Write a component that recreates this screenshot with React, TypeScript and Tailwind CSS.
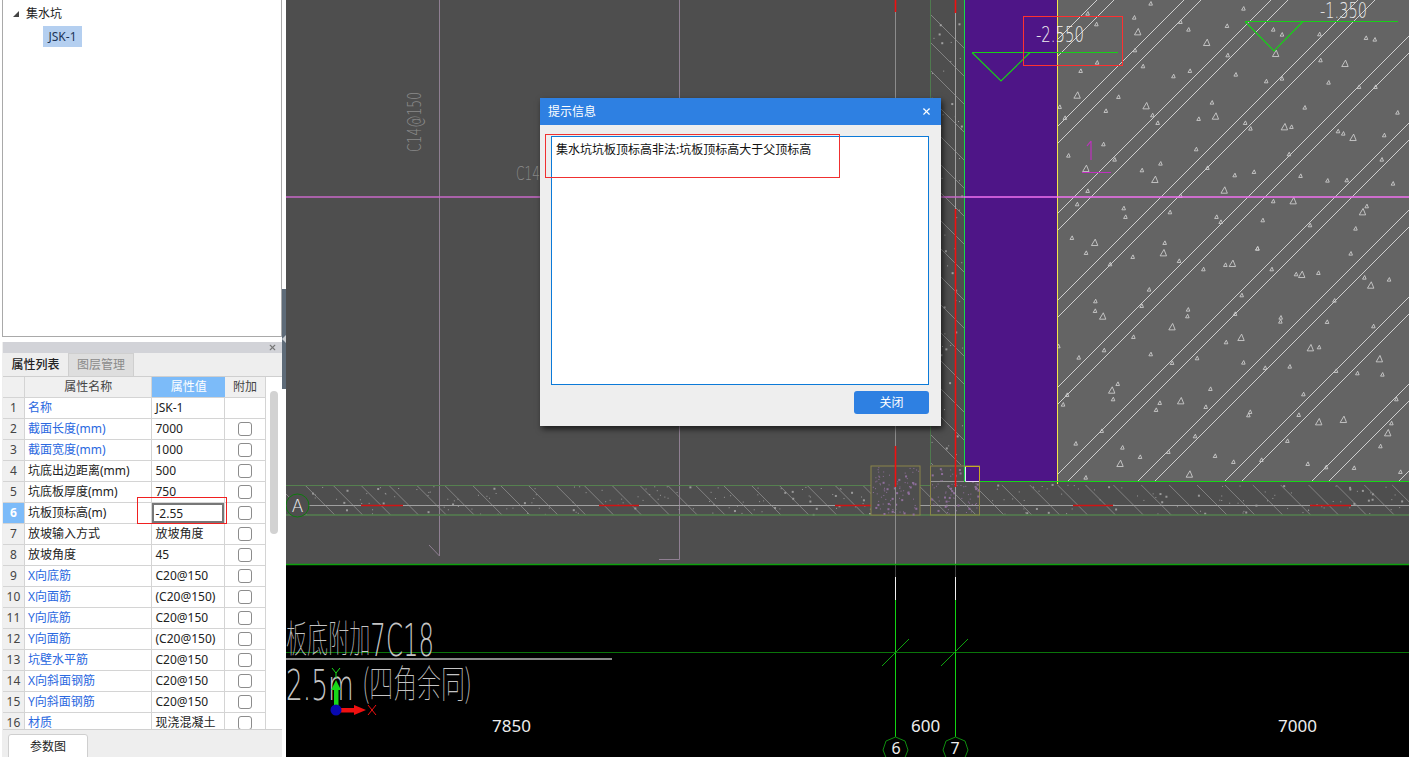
import { X } from "lucide-react";

const rows = [
  { name: "名称", value: "JSK-1", blue: true, noCheck: true },
  { name: "截面长度(mm)", value: "7000", blue: true },
  { name: "截面宽度(mm)", value: "1000", blue: true },
  { name: "坑底出边距离(mm)", value: "500" },
  { name: "坑底板厚度(mm)", value: "750" },
  { name: "坑板顶标高(m)", value: "-2.55", active: true },
  { name: "放坡输入方式", value: "放坡角度" },
  { name: "放坡角度", value: "45" },
  { name: "X向底筋", value: "C20@150", blue: true },
  { name: "X向面筋", value: "(C20@150)", blue: true },
  { name: "Y向底筋", value: "C20@150", blue: true },
  { name: "Y向面筋", value: "(C20@150)", blue: true },
  { name: "坑壁水平筋", value: "C20@150", blue: true },
  { name: "X向斜面钢筋", value: "C20@150", blue: true },
  { name: "Y向斜面钢筋", value: "C20@150", blue: true },
  { name: "材质", value: "现浇混凝土", blue: true },
];

// aggregate marks read off the drawing: x, y, large
const upperMarks = [
  [830,10],[650,40],[783,52],[915,65],[1095,25],[675,72],[1048,77],[938,88],[793,95,1],[1180,88],[1205,103],[1312,102],
  [990,127,1],[785,150],[1050,165],[1187,160,1],[1445,113],[1470,118],[677,187],[808,198],[1315,180],[1385,190,1],[630,212],
  [895,228],[942,212],[1073,223],[1205,235],[1160,243],[1338,247],[1425,260],[1472,260],[620,285,1],[738,290],[1005,307],
  [1270,322],[570,320],[702,332],[817,317,1],[1535,337],[835,345],[1015,348,1],[967,356],[585,353],[850,368],[1100,368],
  [1115,385],[1212,380,1],[1232,380],[1365,393],[1380,400],[1408,412,1],[1497,405],[695,432],[960,447],[1225,462],[595,466],
  [727,478],[1490,478],[645,505,1],[858,490],[992,503],[805,510],[1070,525],[1125,515],[1258,527],[842,538,1],[1335,541],
  [1390,540],[1522,550],[650,572],[1040,570,1],[620,612],[915,587],[1180,603],[1237,602,1],[1447,618],[1435,635,1],[753,624],
  [885,636],[758,650],[1018,650],[1030,665],[1150,660],[1285,675],[1415,685],[605,713],[670,727,1],[870,728],[1135,745],
].map(([x, y, l]) => [x / 2.856 + 860, y / 3, l]);

const lowerMarks = [
  [108,38],[248,50],[340,38,1],[387,62],[180,72],[526,74],[547,70,1],[460,87],[665,87],[738,102],[755,103,1],[805,98],[622,25],
  [902,40],[943,112],[1017,118],[962,135,1],[297,148],[575,165],[853,181],[136,183],[275,197],[135,212],[158,228,1],[414,208],
  [412,228],[555,221],[692,232],[691,244],[831,245],[970,258],[366,260,1],[250,290],[573,292,1],[528,306],[781,323,1],[807,321],
  [25,318],[162,330],[302,342],[86,352],[441,354],[988,356,1],[366,368],[580,367],[719,379],[645,383],[858,392],[922,399],[997,403],
  [203,431],[185,450,1],[481,446],[51,464],[189,477],[39,493],[329,488],[392,482,1],[467,500],[760,462],[1039,477],[318,509],
  [600,515],[595,525],[746,524],[806,545,1],[880,538,1],[155,572],[1024,549],[435,588],[77,610],[712,602],[1013,578,1],[991,618],
  [217,622],[355,635],[270,650],[495,647],[550,665],[634,659],[210,670,1],[773,671],[828,681],[912,683],[107,712],[418,702,1],[1051,695],
].map(([x, y, l]) => [x / 3 + 1050, y / 3 + 240, l]);

const marks = [...upperMarks, ...lowerMarks];

// small repeatable noise for the concrete speckle
let seed = 17;
function rnd() {
  seed = (seed * 16807) % 2147483647;
  return seed / 2147483647;
}
function speckle(x: number, y: number, w: number, h: number, count: number) {
  return Array.from({ length: count }, () => [x + rnd() * w, y + rnd() * h, rnd() > 0.75 ? 2 : 1]);
}

const stripDots = [...speckle(312, 486, 559, 28, 130), ...speckle(980, 483, 429, 31, 90)];
const wallDots = speckle(931, 0, 32, 465, 60);
const boxDots = [...speckle(872, 467, 47, 47, 90), ...speckle(931, 467, 47, 47, 80)];
const slabLines: number[] = [];
for (let c = 1097; c < 1900; c += 87) {
  slabLines.push(c, c + 17);
}

function Drawing() {
  return (
    <svg viewBox="286 0 1123 757" className="block h-[757px] w-[1123px]">
      <rect x="286" y="0" width="1123" height="564" fill="#4e4e4e" />
      <rect x="286" y="565" width="1123" height="192" fill="#000" />

      {/* rebar leaders */}
      <path d="M439.5 0V556L429 545" stroke="#8f7f92" fill="none" />
      <path d="M679.5 0V559.5H659" stroke="#8f7f92" fill="none" />
      <text transform="translate(421 152) rotate(-90)" fontSize="19" fill="#8a8a8a" fontFamily="DejaVu Sans" fontWeight="200" textLength="60" lengthAdjust="spacingAndGlyphs">C14@150</text>
      <text x="516" y="180" fontSize="19" fill="#8a8a8a" fontFamily="DejaVu Sans" fontWeight="200" textLength="24" lengthAdjust="spacingAndGlyphs">C14</text>

      {/* slab fill */}
      <rect x="1057" y="0" width="352" height="481" fill="#646464" />
      <clipPath id="slab"><rect x="1058" y="0" width="351" height="481" /></clipPath>
      <g clipPath="url(#slab)" stroke="#cfcfcf">
        {slabLines.map((c) => (
          <line key={c} x1={c} y1="0" x2={c - 500} y2="500" />
        ))}
      </g>
      {marks.map(([x, y, l], i) => {
        const r = l ? 3.2 : 1.8;
        return <path key={i} d={`M${x - r} ${y + r}L${x + r * 0.2} ${y - r}L${x + r} ${y + r}Z`} fill="none" stroke="#cccccc" strokeWidth="0.9" />;
      })}

      {/* wall */}
      <clipPath id="wall"><rect x="931" y="0" width="33" height="465" /></clipPath>
      <g clipPath="url(#wall)" stroke="#8f8f8f" strokeWidth="0.8">
        {Array.from({ length: 20 }, (_, i) => (
          <line key={i} x1="900" y1={-16 + i * 28} x2="1000" y2={84 + i * 28} />
        ))}
      </g>
      {wallDots.map(([x, y, s], i) => (
        <rect key={i} x={x} y={y} width={s} height={s} fill="#a0a0a0" />
      ))}
      <line x1="930.5" y1="0" x2="930.5" y2="465" stroke="#4f7a4f" />
      <rect x="965" y="0" width="92" height="481" fill="#4e1587" />
      <line x1="964.5" y1="0" x2="964.5" y2="481" stroke="#16d84a" />
      <line x1="1057.5" y1="0" x2="1057.5" y2="484" stroke="#f5e64a" />

      {/* strip footing */}
      <clipPath id="strip">
        <rect x="286" y="486" width="694" height="29" />
        <rect x="980" y="482" width="429" height="33" />
      </clipPath>
      <g clipPath="url(#strip)" stroke="#8f8f8f" strokeWidth="0.8">
        {Array.from({ length: 43 }, (_, i) => (
          <line key={i} x1={277 + i * 27.88} y1="485" x2={307 + i * 27.88} y2="515" />
        ))}
      </g>
      {stripDots.map(([x, y, s], i) => (
        <rect key={i} x={x} y={y} width={s} height={s} fill="#9a9a9a" />
      ))}
      <line x1="286" y1="485.5" x2="871" y2="485.5" stroke="#55804f" />
      <line x1="920" y1="485.5" x2="931" y2="485.5" stroke="#55804f" />
      <line x1="286" y1="515" x2="1409" y2="515" stroke="#55804f" strokeWidth="1.6" />
      <line x1="286" y1="505.5" x2="1409" y2="505.5" stroke="#a0a0a0" />
      <path d="M361 505.5H403M599 505.5H639M835 505.5H876M1073 505.5H1113M1310 505.5H1351" stroke="#d01414" strokeWidth="1.6" />
      <line x1="930" y1="481.5" x2="965" y2="481.5" stroke="#9a9a9a" />
      <line x1="964" y1="481.5" x2="1409" y2="481.5" stroke="#16d816" strokeWidth="1.2" />

      {/* column boxes */}
      <rect x="871" y="466" width="49" height="49" fill="#4e4e4e" stroke="#8a8448" />
      <rect x="930.5" y="466" width="49" height="49" fill="none" stroke="#8a8448" />
      {boxDots.map(([x, y, s], i) => (
        <rect key={i} x={x} y={y} width={s} height={s} fill="#8f6f9c" />
      ))}
      <rect x="965" y="466" width="14" height="15" fill="#4e1587" />
      <path d="M965.5 466V481.5H979" stroke="#e8d8f8" fill="none" />
      <path d="M965 466.5H979.5V481" stroke="#c8a828" fill="none" />

      {/* grid lines */}
      <line x1="895.5" y1="0" x2="895.5" y2="564" stroke="#8c8c8c" />
      <line x1="955.5" y1="0" x2="955.5" y2="564" stroke="#a0a0a0" />
      <path d="M895.5 565V577M955.5 565V577" stroke="#444" />
      <path d="M895.5 0V12M895.5 446V487M955.5 0V13M955.5 209V487" stroke="#f01010" strokeWidth="1.6" />
      <line x1="286" y1="197" x2="964" y2="197" stroke="#c868c8" strokeWidth="1.4" />
      <line x1="964" y1="197" x2="1409" y2="197" stroke="#f070f0" strokeWidth="1.4" />
      <line x1="286" y1="564.5" x2="1409" y2="564.5" stroke="#0ca00c" strokeWidth="1.5" />

      {/* level marks */}
      <path d="M972 52.5H1118M972 52.5L1001 81L1030 52.5" stroke="#17d017" fill="none" strokeWidth="1.2" />
      <path d="M1245 21.5H1398M1245 21.5L1274 51L1303 21.5" stroke="#17d017" fill="none" strokeWidth="1.2" />
      <rect x="1023.5" y="16.5" width="99" height="49" fill="none" stroke="#ff3030" />
      <text x="1036" y="42" fontSize="21" fill="#f0f0f0" fontFamily="DejaVu Sans" fontWeight="200" textLength="48" lengthAdjust="spacingAndGlyphs">-2.550</text>
      <text x="1320" y="18" fontSize="21" fill="#e8e8e8" fontFamily="DejaVu Sans" fontWeight="200" textLength="47" lengthAdjust="spacingAndGlyphs">-1.350</text>
      <path d="M1091 141V160M1087 146L1091 141M1082 172.5H1111" stroke="#c030c0" fill="none" strokeWidth="1.2" />

      {/* axis bubble A */}
      <circle cx="297.5" cy="505.5" r="11.5" fill="#4e4e4e" stroke="#0e7a0e" />
      <text x="297.5" y="512" textAnchor="middle" fontSize="17" fill="#f2f2f2" fontFamily="DejaVu Sans" fontWeight="200">A</text>

      {/* lower sheet */}
      <line x1="286" y1="652.5" x2="1409" y2="652.5" stroke="#0a740a" />
      <line x1="286" y1="659" x2="612" y2="659" stroke="#b8b8b8" strokeWidth="1.3" />
      <path d="M895.5 577V600M955.5 577V600" stroke="#f0f0f0" />
      <path d="M895.5 600V737M955.5 600V737" stroke="#12d212" />
      <path d="M882 666L909 639M941 666L968 639" stroke="#0ea00e" />
      <text x="286" y="652" fontSize="38" fill="#c4c4c4" fontFamily="Noto Sans CJK SC" fontWeight="100" textLength="148" lengthAdjust="spacingAndGlyphs">
        板底附加<tspan dy="4" fontSize="44" fontFamily="DejaVu Sans" fontWeight="200">7C18</tspan>
      </text>
      <text x="286" y="700" fontSize="42" fill="#c4c4c4" fontFamily="DejaVu Sans" fontWeight="200" textLength="186" lengthAdjust="spacingAndGlyphs">
        2.5m <tspan dy="-3" fontSize="38" fontFamily="Noto Sans CJK SC" fontWeight="100">(四角余同)</tspan>
      </text>
      <text x="492" y="732" fontSize="17" fill="#eeeeee" fontFamily="Noto Sans">7850</text>
      <text x="911" y="732" fontSize="17" fill="#eeeeee" fontFamily="Noto Sans">600</text>
      <text x="1278" y="732" fontSize="17" fill="#eeeeee" fontFamily="Noto Sans">7000</text>
      <polygon points="895.5,737 905,741 908,750 904,760 887,760 883,750 886,741" fill="#000" stroke="#0e8a0e" />
      <polygon points="955.5,737 965,741 968,750 964,760 947,760 943,750 946,741" fill="#000" stroke="#0e8a0e" />
      <text x="896" y="754" textAnchor="middle" fontSize="16" fill="#eeeeee" fontFamily="Noto Sans">6</text>
      <text x="955" y="754" textAnchor="middle" fontSize="16" fill="#eeeeee" fontFamily="Noto Sans">7</text>

      {/* coordinate triad */}
      <rect x="334" y="689" width="4.5" height="17" fill="#18d818" />
      <polygon points="336,680 341,690 331,690" fill="#18d818" />
      <rect x="340" y="708" width="15" height="4.5" fill="#f01010" />
      <polygon points="366,710 354,705 354,715" fill="#f01010" />
      <circle cx="336" cy="710" r="5.5" fill="#0808b0" />
      <path d="M332 668L336 673L340 668M336 673V678" stroke="#18d818" fill="none" />
      <path d="M368 705L376 715M376 705L368 715" stroke="#f01010" fill="none" />
    </svg>
  );
}

function PropertyPanel() {
  return (
    <section className="relative flex h-[415px] flex-col overflow-hidden bg-[#eeeeee] pl-[1px]">
      <div className="flex h-[11px] items-center justify-end bg-[#d2d3d8] pr-[5px]">
        <X size={9} strokeWidth={3} className="text-[#777]" />
      </div>
      <div className="flex h-[24px] border-b border-[#cfcfcf] text-[12px]">
        <div className="flex w-[65px] items-center justify-center bg-[#eeeeee] font-medium text-[#222]">属性列表</div>
        <div className="flex w-[66px] items-center justify-center border-x border-t border-[#cfcfcf] bg-[#dedede] text-[#8a8a8a]">图层管理</div>
      </div>
      <div className="flex min-h-0 flex-1">
        <div className="w-[264px] overflow-hidden">
          <div className="flex h-[21px] border-b border-[#d4d4d4] text-[12px] leading-[20px]">
            <div className="w-[22px] border-r border-[#d4d4d4] bg-[#f0f0f0]" />
            <div className="w-[128px] border-r border-[#d4d4d4] bg-[#f0f0f0] text-center text-[#444]">属性名称</div>
            <div className="w-[73px] bg-[#7cbbf9] text-center text-white">属性值</div>
            <div className="w-[41px] border-r border-[#d4d4d4] bg-[#f0f0f0] text-center text-[#444]">附加</div>
          </div>
          {rows.map((row, i) => (
            <div key={row.name} className="flex h-[21px] border-b border-[#d4d4d4] bg-white text-[12px] leading-[20px]">
              <div className={row.active ? "w-[22px] border-r border-[#d4d4d4] bg-[#7cbbf9] text-center font-bold text-white" : "w-[22px] border-r border-[#d4d4d4] bg-[#f0f0f0] text-center text-[#444]"}>
                {i + 1}
              </div>
              <div className={row.blue ? "w-[128px] border-r border-[#d4d4d4] pl-[3px] whitespace-nowrap text-[#2a68e0]" : "w-[128px] border-r border-[#d4d4d4] pl-[3px] whitespace-nowrap text-[#222]"}>
                {row.name}
              </div>
              <div className="w-[73px] border-r border-[#d4d4d4] text-[#222]">
                {row.active ? (
                  <div className="h-[20px] border-2 border-[#777] pl-[1px] leading-[17px]">{row.value}</div>
                ) : (
                  <div className="pl-[3px]">{row.value}</div>
                )}
              </div>
              <div className="flex w-[41px] items-center justify-center border-r border-[#d4d4d4]">
                {!row.noCheck && <div className="size-[14px] rounded-[3px] border border-[#8c8c8c] bg-white" />}
              </div>
            </div>
          ))}
        </div>
        <div className="w-[16px] bg-white pt-[14px] pl-[4px]">
          <div className="h-[143px] w-[8px] rounded-[4px] bg-[#d2d2d2]" />
        </div>
      </div>
      <div className="h-[28px] border-t border-[#d0d0d0] pt-[3px] pl-[5px]">
        <button className="h-[26px] w-[80px] rounded-[3px] border border-[#cfcfcf] bg-white text-[12px] text-[#222]">参数图</button>
      </div>
      {/* red review mark around the edited value */}
      <div className="absolute top-[155px] left-[135px] h-[27px] w-[90px] border border-[#f02020]" />
    </section>
  );
}

export default function App() {
  return (
    <div className="flex h-[757px] w-[1409px] overflow-hidden bg-white font-['Noto_Sans','Noto_Sans_CJK_SC',sans-serif] text-[#222]">
      <aside className="flex w-[282px] flex-col pl-[2px]">
        <div className="h-[337px] border-x border-b border-[#a9a9a9] bg-white pt-[4px] text-[12px]">
          <div className="flex h-[20px] items-center pl-[10px]">
            <span className="h-0 w-0 border-b-[6px] border-l-[6px] border-b-[#444] border-l-transparent" />
            <span className="pl-[7px]">集水坑</span>
          </div>
          <div className="mt-[2px] ml-[40px] flex h-[21px] w-[39px] items-center justify-center bg-[#b4cff0] text-[#1c3558]">JSK-1</div>
        </div>
        <div className="h-[5px]" />
        <PropertyPanel />
      </aside>

      <div className="w-[4px] bg-white pt-[289px]">
        <div className="flex h-[100px] items-center bg-[#5e6b78]">
          <span className="h-0 w-0 border-y-[4px] border-r-[4px] border-y-transparent border-r-[#c8ccd0]" />
        </div>
      </div>

      <main className="relative flex-1">
        <Drawing />

        <div className="absolute top-[98px] left-[254px] flex h-[328px] w-[401px] flex-col bg-[#eeeeee] shadow-[2px_3px_6px_rgba(0,0,0,0.65)]">
          <div className="flex h-[27px] items-center justify-between bg-[#2e80e2] pr-[9px] pl-[8px] text-[12px] text-white">
            <span>提示信息</span>
            <X size={11} strokeWidth={2.5} />
          </div>
          <div className="mt-[11px] mr-[12px] ml-[11px] h-[249px] border border-[#0c7ad8] bg-white pt-[4px] pl-[4px] text-[12px] text-[#111]">
            集水坑坑板顶标高非法:坑板顶标高大于父顶标高
          </div>
          <div className="mt-[6px] flex justify-end pr-[12px]">
            <button className="h-[23px] w-[75px] rounded-[3px] bg-[#2e80e2] text-[12px] text-white">关闭</button>
          </div>
          <div className="absolute top-[36px] left-[5px] h-[44px] w-[295px] border border-[#f03030]" />
        </div>
      </main>
    </div>
  );
}
